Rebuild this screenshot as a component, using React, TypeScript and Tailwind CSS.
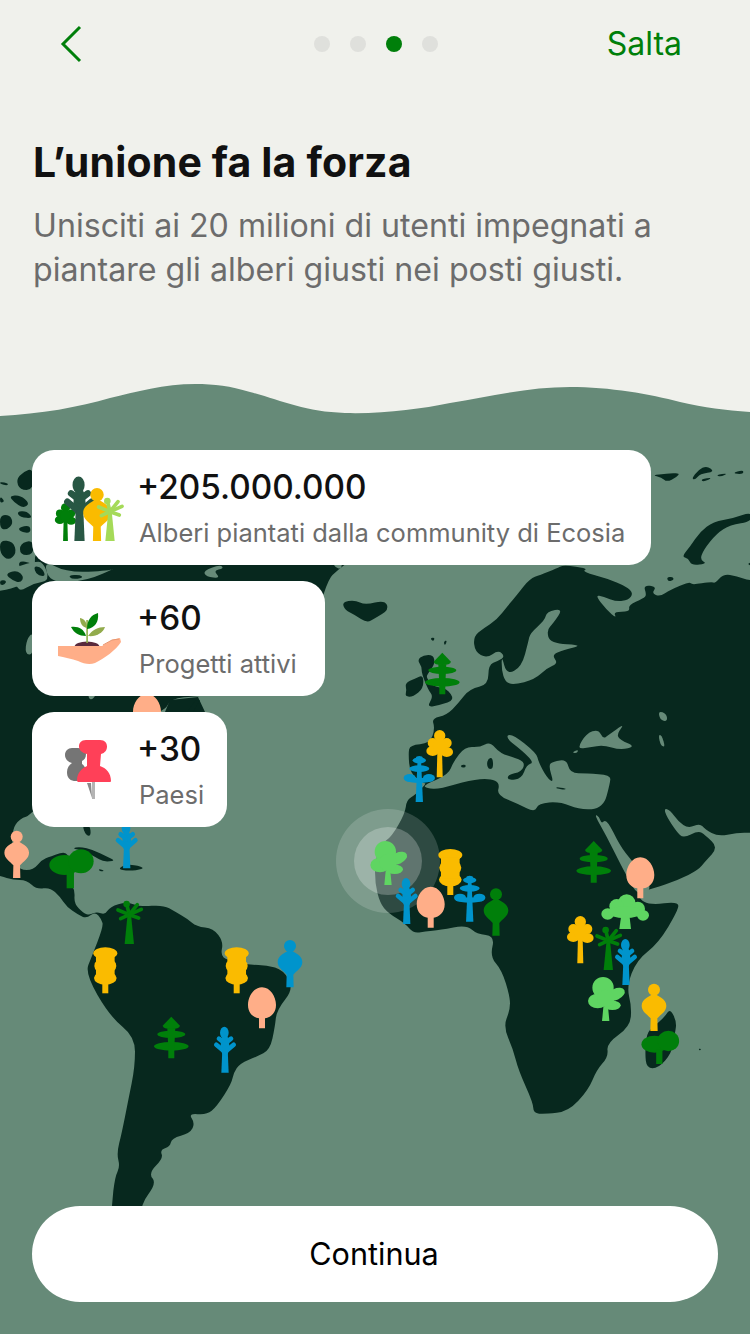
import React from "react";

const smooth = (s: string) => {
  const p = s.trim().split(/\s+/).map((t) => t.split(",").map(Number));
  const n = p.length;
  const mid = (a: number[], b: number[]) => [(a[0] + b[0]) / 2, (a[1] + b[1]) / 2];
  let d = "";
  const m0 = mid(p[n - 1], p[0]);
  d += `M${m0[0]} ${m0[1]}`;
  for (let i = 0; i < n; i++) {
    const m = mid(p[i], p[(i + 1) % n]);
    d += `Q${p[i][0]} ${p[i][1]} ${m[0]} ${m[1]}`;
  }
  return d + "Z";
};

const LAND = "#07281e";
const SEA = "#668a78";
const Y = "#fabb00";
const B = "#0094cc";
const G = "#007f0a";
const P = "#ffae88";
const L = "#5fd562";

type TP = { x: number; y: number; c: string; s?: number };
const T: React.FC<TP & { children: React.ReactNode }> = ({ x, y, c, s = 1, children }) => (
  <g transform={`translate(${x} ${y}) scale(${s / 3})`} fill={c} stroke={c} strokeWidth={0} strokeLinecap="round">
    {children}
  </g>
);

const Bulb = (p: TP) => (
  <T {...p}>
    <circle cx={0} cy={-124} r={18} />
    <path d="M0 -114C12 -104 37 -97 37 -76C37 -58 20 -50 10 -38L11 0L-11 0L-10 -38C-20 -50 -37 -58 -37 -76C-37 -97 -12 -104 0 -114Z" />
  </T>
);
const Egg = (p: TP) => (
  <T {...p}>
    <path d="M0 -123C25 -123 42 -95 42 -70C42 -45 25 -32 9 -30L9 0L-9 0L-9 -30C-25 -32 -42 -45 -42 -70C-42 -95 -25 -123 0 -123Z" />
  </T>
);
const Stack = (p: TP) => (
  <T {...p}>
    <ellipse cx={0} cy={-120} rx={36} ry={18} />
    <ellipse cx={0} cy={-82} rx={33} ry={25} />
    <ellipse cx={0} cy={-46} rx={34} ry={20} />
    <rect x={-28} y={-112} width={56} height={62} />
    <rect x={-9} y={-40} width={18} height={40} />
  </T>
);
const Fir = (p: TP) => (
  <T {...p}>
    <path d="M0 -125L26 -98Q24 -88 0 -88Q-24 -88 -26 -98Z" />
    <ellipse cx={0} cy={-72} rx={42} ry={11} />
    <ellipse cx={0} cy={-36} rx={52} ry={13} />
    <path d="M-9 0L-9 -30L-12 -90L12 -90L9 -30L9 0Z" />
  </T>
);
const Feather = (p: TP) => (
  <T {...p}>
    <path d="M-11 0L-8 -70L8 -70L11 0Z" />
    <ellipse cx={-2} cy={-120} rx={13} ry={18} />
    <ellipse cx={0} cy={-82} rx={13} ry={32} />
    <g stroke={p.c} strokeWidth={14} fill="none">
      <path d="M0 -62L-26 -84" />
      <path d="M0 -62L26 -84" />
      <path d="M0 -88L-18 -102" />
      <path d="M0 -88L18 -102" />
    </g>
  </T>
);
const Palm = (p: TP) => (
  <T {...p}>
    <path d="M-14 0L-5 -90L5 -90L14 0Z" />
    <circle cx={-8} cy={-120} r={10} />
    <g stroke={p.c} strokeWidth={11} fill="none">
      <path d="M0 -88L-8 -120" />
      <path d="M0 -88L-34 -102" />
      <path d="M0 -88L-26 -76" />
      <path d="M0 -88L36 -104" />
      <path d="M0 -88L24 -118" />
      <path d="M0 -88L28 -78" />
    </g>
  </T>
);
const Umbrella = (p: TP) => (
  <T {...p}>
    <ellipse cx={-17} cy={-70} rx={46} ry={30} />
    <ellipse cx={32} cy={-81} rx={38} ry={36} />
    <rect x={-11} y={-50} width={22} height={50} />
  </T>
);
const Club = (p: TP) => (
  <T {...p}>
    <circle cx={-8} cy={-100} r={32} />
    <ellipse cx={-24} cy={-60} rx={29} ry={22} />
    <ellipse cx={30} cy={-80} rx={29} ry={17} transform="rotate(-25 30 -80)" />
    <ellipse cx={20} cy={-47} rx={25} ry={14} />
    <circle cx={0} cy={-68} r={26} />
    <path d="M-11 0L-7 -42L7 -42L11 0Z" />
  </T>
);
const Pine = (p: TP) => (
  <T {...p}>
    <path d="M-11 0L-5 -130L5 -130L11 0Z" />
    <ellipse cx={0} cy={-125} rx={20} ry={9} />
    <ellipse cx={0} cy={-133} rx={10} ry={5} />
    <ellipse cx={0} cy={-100} rx={30} ry={10} />
    <ellipse cx={-29} cy={-72} rx={18} ry={12} />
    <ellipse cx={29} cy={-72} rx={18} ry={12} />
    <ellipse cx={0} cy={-65} rx={36} ry={8} />
  </T>
);
const Clover = (p: TP) => (
  <T {...p}>
    <circle cx={0} cy={-125} r={17} />
    <circle cx={-21} cy={-103} r={15} />
    <circle cx={21} cy={-103} r={15} />
    <ellipse cx={-21} cy={-79} rx={19} ry={15} />
    <ellipse cx={21} cy={-76} rx={19} ry={15} />
    <circle cx={0} cy={-95} r={20} />
    <path d="M-9 0L-7 -80L7 -80L9 0Z" />
  </T>
);
const Broccoli = (p: TP) => (
  <T {...p}>
    <circle cx={5} cy={-78} r={26} />
    <circle cx={-25} cy={-68} r={22} />
    <ellipse cx={-52} cy={-45} rx={19} ry={17} />
    <circle cx={38} cy={-60} r={22} />
    <ellipse cx={54} cy={-41} rx={18} ry={16} />
    <ellipse cx={0} cy={-50} rx={50} ry={18} />
    <path d="M-17 0L-12 -35L14 -35L18 0Z" />
  </T>
);

const americas = `-120,-624 0,-624 66,-645 105,-675 105,-780 1020,-780 1062,-726 1020,-696 975,-654 900,-330 594,-312 510,-304 495,-264 300,-200 96,45 60,55 35,90 40,180 60,210 100,210 125,180 150,170 210,150 205,240 225,270 222,310 250,340 270,345 290,335 315,345 330,320 380,305 420,320 490,315 525,335 560,355 590,380 640,385 670,425 662,465 680,480 750,495 800,495 850,510 882,565 830,630 825,680 810,750 770,770 720,790 700,820 695,850 650,920 620,945 565,940 585,970 570,1000 515,1015 510,1040 480,1050 490,1075 445,1120 470,1150 420,1215 425,1300 335,1300 335,1215 345,1130 360,1100 350,1060 365,1000 385,900 405,800 405,710 330,650 255,520 275,470 310,380 305,358 285,335 260,355 235,345 200,320 180,290 150,262 110,268 80,240 40,240 0,228 -120,195`;

const eurafrica = `1085,-175 1300,-175 1300,578 1085,578 1040,578 985,590 945,568 930,550 895,565 865,545 840,510 822,505 830,530 860,575 880,595 925,572 945,585 985,622 945,665 925,690 865,720 790,745 755,755 745,775 780,795 865,785 865,810 805,910 740,960 710,1040 725,1100 720,1160 650,1210 655,1250 620,1290 595,1350 535,1415 465,1422 430,1420 430,1390 385,1290 370,1230 340,1160 360,1110 360,1070 335,990 300,950 315,888 260,882 230,855 150,870 105,875 70,880 45,850 -5,820 -30,790 -45,730 -45,660 -25,610 5,590 45,520 50,480 75,465 110,430 100,430 60,400 55,340 60,315 120,310 135,265 125,235 170,225 205,190 240,145 295,135 295,75 325,62 345,50 325,30 290,55 255,35 250,-10 280,-35 320,-60 355,-105 385,-140 420,-185 450,-195 500,-215 520,-225 595,-215 575,-205 650,-185 710,-160 730,-140 715,-120 680,-115 640,-130 615,-135 650,-90 680,-65 670,-85 720,-85 715,-105 760,-125 770,-135 760,-165 800,-160 785,-140 810,-130 840,-150 900,-175 905,-165 965,-175 975,-170 1000,-198 1040,-192`;

const seas = [
  `335,45 350,105 395,80 415,5 420,-20 465,-60 470,-85 520,-95 490,-50 470,-30 480,10 582,15 520,30 485,45 505,70 470,85 435,118 370,135 345,125 335,90`,
  `100,435 175,405 190,365 225,320 270,322 300,305 330,340 380,355 405,368 395,395 352,405 355,422 395,415 410,375 432,368 400,335 345,292 365,280 440,340 445,365 470,412 492,430 475,375 490,365 530,358 540,400 590,400 662,405 660,430 640,505 570,510 510,485 445,490 435,517 385,492 320,465 330,430 300,415 240,420 150,447 110,445`,
  `560,327 590,280 625,268 640,297 655,285 705,250 680,282 690,300 737,320 690,330 640,315 600,322`,
  `545,338 565,328 562,340`,
  `805,212 830,222 832,245 810,240`,
  `805,285 815,285 826,322 812,316`,
  `612,522 628,530 634,552 650,536 690,618 725,662 792,745 745,768 712,712 688,665 650,590`,
];

const z9Islands = [
  `45,130 75,115 100,105 100,145 70,170 45,170 50,150`,
  `82,60 100,45 130,45 135,70 115,100 108,112 130,140 170,145 195,180 150,195 110,202 130,170 115,150 95,100 95,80`,
  `295,355 308,353 310,385 296,388 290,372`,
  `212,375 228,374 226,383 214,382`,
  `497,441 528,445 526,449 500,446`,
  `120,-5 135,-8 130,5`,
  `160,5 172,0 165,18`,
  `840,1105 860,1145 855,1180 845,1240 805,1285 770,1285 765,1240 770,1180 790,1160 825,1130`,
  `925,1226 934,1227 930,1232`,
];

const z8Islands = [
  `695,320 720,290 750,245 790,215 850,205 905,185 905,215 840,225 800,250 760,300 750,330 772,340 725,347 715,325`,
  `605,75 650,72 690,68 680,82 650,96 635,82`,
  `725,85 745,60 770,47 795,65 750,72 735,90`,
  `752,88 790,82 760,96`,
  `797,75 835,69 812,81`,
  `845,70 880,59 880,73`,
  `650,382 668,380 672,390 655,395`,
  `892,342 905,336 905,348`,
];

const z6Dark = [
  `48,120 70,95 100,85 100,150 60,150`,
  `0,125 25,130 22,137 0,132`,
  `28,168 60,165 90,190 70,205 40,185`,
  `0,168 15,184 0,190`,
  `50,215 80,213 100,235 60,232`,
  `0,225 30,225 40,250 20,270 0,265`,
  `55,262 90,255 92,280 60,275`,
  `0,300 40,305 50,340 25,362 0,340`,
  `60,310 100,300 100,345 60,345`,
  `50,362 100,368 130,410 70,402`,
  `100,425 125,425 130,460 90,460`,
];

const z7Sea = [
  `0,38 30,28 60,18 100,5 130,5 150,62 100,70 60,95 50,75 0,72`,
  `130,0 200,38 330,32 350,22 262,62 150,70`,
  `610,32 660,14 672,25 640,32 662,55 618,50`,
  `1000,-5 1025,0 1025,30 1000,18`,
  `75,282 80,238 100,215 100,285`,
  `262,404 290,404 272,422`,
];

const z7Dark = [
  `15,42 50,30 72,50 62,68 38,62`,
  `100,18 125,22 138,50 110,45`,
  `0,60 20,62 14,75 0,75`,
  `205,46 240,44 250,54 215,58`,
];

const Map = () => (
  <svg className="absolute top-0 left-0" width={750} height={1334} viewBox="0 0 750 1334">
    <g fill={LAND}>
      <g transform="translate(0 800) scale(.33333)">
        <path d={smooth(americas)} />
        <path d={smooth(`215,145 240,140 280,150 320,170 348,182 310,186 285,170 250,152`)} />
        <path d={smooth(`352,207 380,192 425,199 430,208 385,213`)} />
        <path d={smooth(`295,206 315,212 300,215`)} />
        <path d={smooth(`246,75 270,75 273,108 258,107`)} />
      </g>
      <g transform="translate(0 440) scale(.33333)">
        {z6Dark.map((d) => (
          <path key={d} d={smooth(d)} />
        ))}
      </g>
      <path d={smooth(`342,602 355,600 365,605 385,600 389,610 375,618 367,623 355,615 345,610`)} />
      <g transform="translate(390 640) scale(.33333)">
        <path d={smooth(eurafrica)} />
      </g>
    </g>
    <g transform="translate(0 560) scale(.33333)">
      <g fill={SEA}>
        {z7Sea.map((d) => (
          <path key={d} d={smooth(d)} />
        ))}
      </g>
      <g fill={LAND}>
        {z7Dark.map((d) => (
          <path key={d} d={smooth(d)} />
        ))}
      </g>
    </g>
    <g transform="translate(390 640) scale(.33333)">
      <g fill={SEA}>
        {seas.map((d) => (
          <path key={d} d={smooth(d)} />
        ))}
      </g>
      <g fill={LAND}>
        {z9Islands.map((d) => (
          <path key={d} d={smooth(d)} />
        ))}
      </g>
    </g>
    <g transform="translate(450 450) scale(.33333)" fill={LAND}>
      {z8Islands.map((d) => (
        <path key={d} d={smooth(d)} />
      ))}
    </g>
    <path d="M198 697L170 700L165 712L205 712Z" fill={LAND} />
    <path d="M200 700L193 712L187 712L195 701Z" fill={LAND} />

    <circle cx={388} cy={861} r={52} fill="#fff" fillOpacity={0.16} />
    <circle cx={388} cy={861} r={34} fill="#fff" fillOpacity={0.24} />

    <Egg x={147} y={735} c={P} />
    <Bulb x={16.7} y={878} c={P} />
    <Umbrella x={70.3} y={888.3} c={G} />
    <Feather x={126.7} y={868.3} c={B} />
    <Palm x={129.3} y={944} c={G} />
    <Stack x={105.3} y={993.3} c={Y} />
    <Stack x={236.7} y={993.3} c={Y} />
    <Bulb x={290} y={987.3} c={B} />
    <Egg x={262} y={1028.3} c={P} />
    <Fir x={171.3} y={1058.3} c={G} />
    <Feather x={225} y={1072.7} c={B} />
    <Fir x={442.3} y={694.3} c={G} />
    <Clover x={439.7} y={777.3} c={Y} />
    <Pine x={419.3} y={802} c={B} />
    <Club x={388} y={885} c={L} />
    <Stack x={450.3} y={895} c={Y} />
    <Feather x={406.7} y={924} c={B} />
    <Egg x={430.7} y={927.7} c={P} />
    <Pine x={469.7} y={921.7} c={B} />
    <Bulb x={496} y={935.7} c={G} />
    <Fir x={593.7} y={882.7} c={G} />
    <Egg x={640.3} y={898.3} c={P} />
    <Broccoli x={625} y={929} c={L} />
    <Clover x={580.3} y={963.3} c={Y} />
    <Palm x={608.3} y={970} c={G} />
    <Feather x={626} y={985} c={B} />
    <Club x={605.7} y={1021} c={L} />
    <Bulb x={654} y={1031} c={Y} />
    <Umbrella x={659.3} y={1064} c={G} s={0.85} />
  </svg>
);

const IconTrees = () => (
  <svg width={75} height={75} viewBox="50 470 75 75">
    <Clover x={65.5} y={541} c={G} s={0.8} />
    <Feather x={79.5} y={541} c="#285744" s={1.4} />
    <Bulb x={97} y={541} c={Y} s={1.12} />
    <Palm x={110} y={541} c="#a5da58" s={1} />
  </svg>
);

const IconHand = () => (
  <svg width={75} height={75} viewBox="50 601 75 75">
    <ellipse cx={87} cy={647} rx={12.5} ry={5.5} fill="#5a2a3c" />
    <rect x={86.3} y={620} width={1.6} height={23} fill="#8fb04a" />
    <path d="M87 629C87 620 91 615 98 613C99 622 95 628 87 629Z" fill={G} />
    <path d="M87 628C82 627 80 623 80 618C85 619 87 623 87 628Z" fill="#92ab4c" />
    <path d="M86 636C79 636 74 633 71 627C78 626 84 629 86 636Z" fill={G} />
    <path d="M88 636C92 630 98 627 105 627C103 633 96 637 88 636Z" fill="#92ab4c" />
    <path d="M58 646L102 646L112 640L120 638L121 642C116 650 105 658 95 663C90 665 84 664 78 661C72 659 64 657 58 656Z" fill={P} />
    <path d="M103 645L112 640L119 639" fill="none" stroke="#e8966f" strokeWidth={1} />
  </svg>
);

const IconPins = () => (
  <svg width={75} height={75} viewBox="50 732 75 75">
    <path d="M87 783L92 798L91 783Z" fill="#8a8a8a" />
    <path d="M72 748L78 748C84 748 86 751 86 754C86 758 84 760 82 761L82 764C85 766 87 770 87 781L74 781C69 780 67 777 67 772C67 768 69 765 72 763C68 762 65 759 65 755C65 751 68 748 72 748Z" fill="#757575" />
    <rect x={92} y={780} width={3} height={19} fill="#b4b4b4" />
    <path d="M86 740L100 740C105 740 107 743 107 746.5C107 750 105 753 101 754L100 766C106 768 111 773 111 781C111 782 110 782 109 782L79 782C78 782 77 782 77 780C77 773 82 768 87 766L87 754C82 753 79 750 79 746.5C79 743 81 740 86 740Z" fill="#ff4058" />
  </svg>
);

const Card = ({ icon, value, label, w }: { icon: React.ReactNode; value: string; label: string; w: string }) => (
  <div className={`flex h-[115px] items-center rounded-[22px] bg-white pl-[18px] ${w}`}>
    <div className="shrink-0">{icon}</div>
    <div className="ml-[14px] flex flex-col">
      <div className="ml-[-2px] text-[33.3px] leading-[41px] font-medium text-[#111111]">{value}</div>
      <div className="mt-[10px] text-[25.5px] leading-[30px] whitespace-nowrap text-[#6c6c6c]">{label}</div>
    </div>
  </div>
);

export default function App() {
  return (
    <div
      className="relative flex h-[1334px] w-[750px] flex-col overflow-hidden bg-[#668a78]"
      style={{ fontFamily: "Inter, 'Noto Sans', sans-serif" }}
    >
      <Map />
      <div className="relative flex h-[384px] flex-col bg-[#f0f1ec]">
        <div className="grid h-[88px] grid-cols-[1fr_auto_1fr] items-center">
          <div className="pl-[60px]">
            <svg width={22} height={38} viewBox="0 0 22 38">
              <path d="M20 2L3 19L20 36" fill="none" stroke="#007f0a" strokeWidth={3} />
            </svg>
          </div>
          <div className="ml-[1px] flex gap-[20px]">
            <div className="h-[16px] w-[16px] rounded-full bg-[#dfe0dc]" />
            <div className="h-[16px] w-[16px] rounded-full bg-[#dfe0dc]" />
            <div className="h-[16px] w-[16px] rounded-full bg-[#007f0a]" />
            <div className="h-[16px] w-[16px] rounded-full bg-[#dfe0dc]" />
          </div>
          <div className="pr-[68px] text-right text-[32px] leading-[40px] text-[#007f0a]">Salta</div>
        </div>
        <div className="pt-[48px] pl-[33px]">
          <h1 className="text-[41px] leading-[52px] font-bold tracking-[0.15px] text-[#111111]">L’unione fa la forza</h1>
          <p className="mt-[16px] text-[32.15px] leading-[44px] text-[#6c6c6c]">
            Unisciti ai 20 milioni di utenti impegnati a
            <br />
            piantare gli alberi giusti nei posti giusti.
          </p>
        </div>
      </div>
      <svg className="relative block shrink-0" width={750} height={34} viewBox="0 384 750 34">
        <path
          d="M0 384H750V412C725 410 705 408 680 402C650 394 610 387 570 387C530 387 490 396 450 403C420 409 385 414 345 413C305 412 280 400 250 392C230 386 215 384 195 384C165 384 135 392 110 398C80 407 40 414 0 416Z"
          fill="#f0f1ec"
        />
      </svg>
      <div className="relative flex flex-1 flex-col items-start gap-[16px] pt-[32px] pl-[32px]">
        <Card w="w-[619px]" icon={<IconTrees />} value="+205.000.000" label="Alberi piantati dalla community di Ecosia" />
        <Card w="w-[293px]" icon={<IconHand />} value="+60" label="Progetti attivi" />
        <Card w="w-[195px]" icon={<IconPins />} value="+30" label="Paesi" />
      </div>
      <div className="relative px-[32px] pb-[32px]">
        <button className="flex h-[96px] w-full items-center justify-center rounded-[48px] bg-white pr-[2px] text-[30.6px] text-black">
          Continua
        </button>
      </div>
    </div>
  );
}
